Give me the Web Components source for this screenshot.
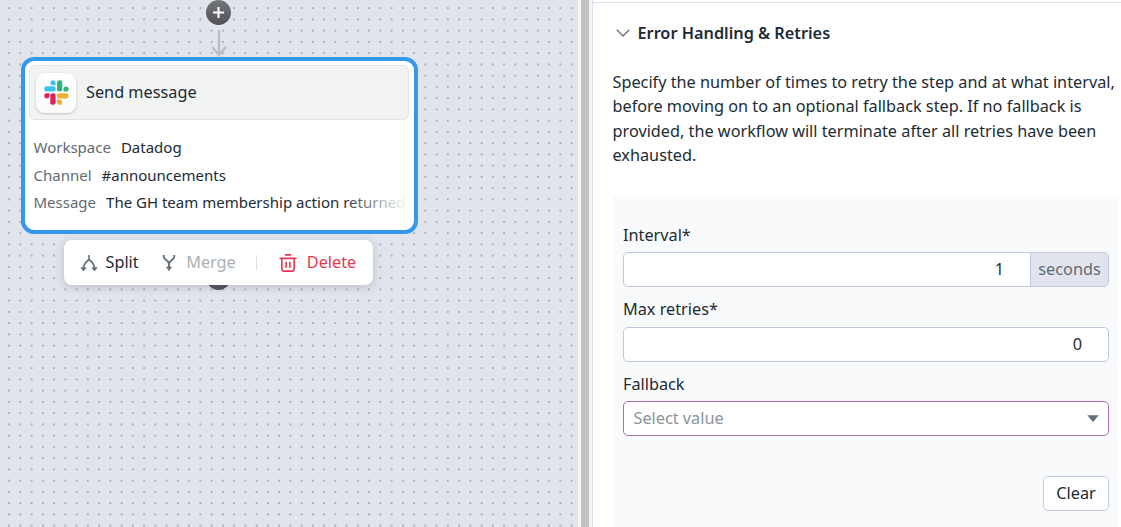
<!DOCTYPE html>
<html lang="en">
<head>
<meta charset="utf-8">
<title>Workflow editor</title>
<style>
html,body{margin:0;height:100%;overflow:hidden}
body{font-family:"Noto Sans",sans-serif;color:#1c2b34;font-size:16.26px}
</style>
</head>
<body>
<workflow-app></workflow-app>
<script>
const define = (name, html) => customElements.define(name, class extends HTMLElement {
  constructor() {
    super();
    const t = document.createElement('template');
    t.innerHTML = html;
    this.attachShadow({mode: 'open'}).append(t.content.cloneNode(true));
  }
});

define('slack-logo', `<style>
:host{display:flex;width:40px;height:40px;border-radius:9px;background:linear-gradient(#fff,#fafafa);box-shadow:0 1px 3px rgba(0,0,0,.22);align-items:center;justify-content:center}
svg{width:25px;height:25px;display:block;margin-left:1px}
</style><svg viewBox="0 0 25 25">
<g fill="#36c5f0"><path d="M9 0.3a2.5 2.5 0 0 0 0 5h2.6v-2.5A2.5 2.5 0 0 0 9 .3z"/><rect x=".3" y="6.300" width="11.400" height="5.300" rx="2.3"/></g>
<g fill="#2eb67d"><rect x="13" y=".3" width="5.300" height="11.300" rx="2.3"/><path d="M24.600 9a2.500 2.500 0 0 0-5.100 0v2.600H22A2.500 2.500 0 0 0 24.600 9z"/></g>
<g fill="#ecb22e"><rect x="13" y="13.200" width="11.500" height="5.300" rx="2.3"/><path d="M15.600 24.700a2.500 2.500 0 0 0 0-5.100H13v2.500a2.500 2.500 0 0 0 2.600 2.600z"/></g>
<g fill="#e01e5a"><rect x="6.300" y="13.200" width="5.300" height="11.500" rx="2.3"/><path d="M.3 15.800a2.500 2.500 0 0 0 5.100 0v-2.600H2.800A2.500 2.500 0 0 0 .3 15.800z"/></g>
</svg>`);

define('add-button', `<style>
:host{display:block;width:25px;height:25px}svg{display:block}
</style><svg width="25" height="25" viewBox="0 0 25 25"><defs><linearGradient id="g" x1="0" y1="0" x2="0" y2="1"><stop stop-color="#75767b"/><stop offset="1" stop-color="#515257"/></linearGradient></defs><circle cx="12.5" cy="12.5" r="12.5" fill="url(#g)"/><path d="M12.5 7v11M7 12.5h11" stroke="#fff" stroke-width="2"/></svg>`);

define('detail-row', `<style>
:host{display:flex;gap:10px;height:27.5px;line-height:27.5px;font-size:15px;white-space:nowrap}
.k{color:#5f6b73}
</style><span class="k"><slot name="label"></slot></span><span><slot></slot></span>`);

define('step-node', `<style>
:host{display:block;box-sizing:border-box;width:397px;height:177px;border:4px solid #3598ec;border-radius:13px;background:#fff;padding:4px 4.5px 0 4px}
header{display:flex;align-items:center;gap:10.5px;box-sizing:border-box;height:55px;padding:0 6px;border:1px solid #e1e3e4;border-radius:6px;background:#f2f4f3;font-size:16.26px}
.title{margin-top:-2px}
.rows{margin:14px 6px 0 5px;position:relative}
.fade{position:absolute;right:-8px;bottom:0;width:69px;height:27px;background:linear-gradient(90deg,rgba(255,255,255,0),#fff 65px)}
</style><header><slot name="icon"></slot><span class="title"><slot name="title"></slot></span></header><div class="rows"><slot></slot><div class="fade"></div></div>`);

define('node-toolbar', `<style>
:host{display:flex;align-items:center;box-sizing:border-box;width:309px;height:45px;padding-left:16px;border-radius:8px;background:#fff;box-shadow:0 2px 10px rgba(40,45,80,.2);font-size:16.26px;line-height:22px}
svg{display:block;flex:none}
.merge{color:#abb0b4}.delete{color:#e8364f}
.item{display:flex;align-items:center}
.item span{margin-top:-2px}
.split svg{margin-right:7.5px}.merge{margin-left:22px}.merge svg{margin-right:9.5px}
i{width:1px;height:15px;background:#dfe0ea;margin:0 22px 0 20.5px}
.delete svg{margin-right:9.5px}
</style>
<span class="item split"><svg width="18" height="18" viewBox="0 0 18 18" fill="none" stroke="#65717a" stroke-width="1.6"><path d="M9 1v4.5M9 5.5C5.5 8 3.5 10 3.5 14.5M9 5.500C12.500 8 14.500 10 14.500 14.500"/><path d="M.8 13.700h5.400L3.500 17zM11.800 13.700h5.400L14.500 17z" fill="#65717a" stroke-width=".7"/></svg><span>Split</span></span>
<span class="item merge"><svg width="16" height="18" viewBox="0 0 16 18" fill="none" stroke="#65717a" stroke-width="1.9"><path d="M2.700 1v1.500C2.700 6 8 6 8 10V14M13.300 1v1.500C13.300 6 8 6 8 10"/><path d="M5.500 13h5L8 16.800z" fill="#65717a" stroke-width=".7"/></svg><span>Merge</span></span>
<i></i>
<span class="item delete"><svg width="18" height="18" viewBox="0 0 18 18" fill="none" stroke="#e8364f" stroke-width="1.600"><path d="M6 .9h6M.5 4.400h17M2.800 4.400v10.400q0 2.300 2.300 2.300h7.800q2.300 0 2.300-2.300V4.400M7.200 7.700v6M10.800 7.700v6"/></svg><span>Delete</span></span>`);

define('workflow-canvas', `<style>
:host{display:block;position:relative;width:578px;height:100%;overflow:hidden;background:#e1e4ec}
.dots{display:block;width:100%;height:100%}
.arrow,add-button,step-node,node-toolbar{position:absolute}
.top{left:206px;top:0}.bottom{left:206px;top:265px}
.arrow{left:209px;top:30px}
step-node{left:20.5px;top:57px}
node-toolbar{left:64px;top:240px}
</style>
<svg class="dots"><defs><pattern id="d" width="11.25" height="11.25" patternUnits="userSpaceOnUse" x="3.500" y="2.500"><circle cx="5.625" cy="5.625" r="1.05" fill="#9c9ea3"/></pattern></defs><rect width="100%" height="100%" fill="url(#d)"/></svg>
<add-button class="top"></add-button>
<svg class="arrow" width="20" height="27" viewBox="0 0 20 27" fill="none" stroke="#b8bbc6" stroke-width="2.200"><path d="M10 0v25M3.200 17L10 25l6.800-8"/></svg>
<add-button class="bottom"></add-button>
<step-node>
<slack-logo slot="icon"></slack-logo><span slot="title">Send message</span>
<detail-row><span slot="label">Workspace</span>Datadog</detail-row>
<detail-row><span slot="label">Channel</span>#announcements</detail-row>
<detail-row><span slot="label">Message</span>The GH team membership action returned</detail-row>
</step-node>
<node-toolbar></node-toolbar>`);

define('split-handle', `<style>
:host{display:block;box-sizing:border-box;width:14px;height:100%;background:#c1c1c1;border-left:3px solid #f4f4f5;border-right:3px solid #f4f4f5}
</style>`);

define('form-field', `<style>
:host{display:flex;flex-direction:column}
.label{height:24px;line-height:24px;margin-bottom:var(--label-gap,5px)}
.box{display:flex;box-sizing:border-box;height:35px;border:1px solid var(--line,#c1c6e2);border-radius:5px;background:#fff;overflow:hidden;align-items:center}
</style><div class="label"><slot name="label"></slot></div><div class="box"><slot></slot></div>`);

define('settings-panel', `<style>
:host{display:block;box-sizing:border-box;flex:1;height:100%;border-left:1px solid #dedfee;background:#fff;overflow:hidden}
.top{height:2px;border-bottom:1px solid #dedfee}
h2{display:flex;align-items:center;gap:7.500px;margin:18px 0 0 23px;height:24px;font-size:16.280px;line-height:24px;font-weight:600}
p{margin:25px 0 0 19.500px;font-size:16.260px;line-height:24.400px;white-space:nowrap}
.form{box-sizing:border-box;width:506px;height:340px;margin:29px 0 0 20px;padding:26px 10px 0;background:#f9fafc;display:flex;flex-direction:column;gap:10px}
.second{--label-gap:6px}
.num{flex:1;text-align:right;padding-right:26px}
.unit{align-self:stretch;box-sizing:border-box;width:78px;border-left:1px solid #c1c6e2;background:#e1e3ed;color:#5f6b73;line-height:33px;text-align:center}
.ph{flex:1;padding-left:9.5px;color:#8b9499}
.sel{--line:#b06bb5}
.sel svg{margin-right:9px}
button{align-self:flex-end;box-sizing:border-box;width:66px;height:35px;margin-top:30px;padding:0;border:1px solid #c1c6e2;border-radius:5px;background:#fff;font:inherit;color:inherit}
</style>
<div class="top"></div>
<h2><svg width="14" height="8" viewBox="0 0 14 8" fill="none" stroke="#65717a" stroke-width="1.300"><path d="M.8.800L7 7l6.200-6.200"/></svg><span>Error Handling &amp; Retries</span></h2>
<p>Specify the number of times to retry the step and at what interval,<br>before moving on to an optional fallback step. If no fallback is<br>provided, the workflow will terminate after all retries have been<br>exhausted.</p>
<div class="form">
<form-field><span slot="label">Interval*</span><span class="num">1</span><span class="unit">seconds</span></form-field>
<form-field class="second"><span slot="label">Max retries*</span><span class="num">0</span></form-field>
<form-field class="sel"><span slot="label">Fallback</span><span class="ph">Select value</span><svg width="12" height="7" viewBox="0 0 12 7"><path d="M.3.300h11.400L7 6Q6 7 5 6z" fill="#65717a"/></svg></form-field>
<button>Clear</button>
</div>`);

define('workflow-app', `<style>
:host{display:flex;width:1121px;height:527px;overflow:hidden}
workflow-canvas,split-handle{flex:none}
</style><workflow-canvas></workflow-canvas><split-handle></split-handle><settings-panel></settings-panel>`);
</script>
</body>
</html>
